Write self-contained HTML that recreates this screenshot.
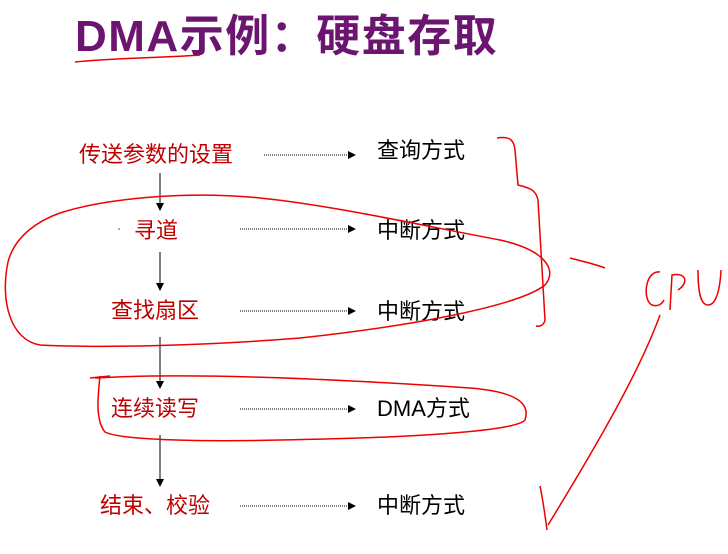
<!DOCTYPE html>
<html><head><meta charset="utf-8"><style>
body{margin:0;width:728px;height:554px;background:#fff;position:relative;overflow:hidden;font-family:"Liberation Sans","Noto Sans CJK SC",sans-serif}
.t{position:absolute;left:75px;top:0px;font-size:44px;font-weight:bold;color:#6b1470;white-space:nowrap;letter-spacing:1.5px}
.r{position:absolute;color:#c00000;font-size:22px;white-space:nowrap;line-height:26px}
.b{position:absolute;color:#000;font-size:22px;white-space:nowrap;line-height:26px;left:377px}
svg{position:absolute;left:0;top:0}
</style></head><body>
<div class="t">DMA示例：硬盘存取</div>
<div class="r" style="left:79px;top:142px">传送参数的设置</div>
<div class="r" style="left:134px;top:218px">寻道</div>
<div class="r" style="left:111px;top:298px">查找扇区</div>
<div class="r" style="left:111px;top:396px">连续读写</div>
<div class="r" style="left:100px;top:493px">结束、校验</div>
<div class="b" style="top:138px">查询方式</div>
<div class="b" style="top:218px">中断方式</div>
<div class="b" style="top:299px">中断方式</div>
<div class="b" style="top:396px">DMA方式</div>
<div class="b" style="top:493px">中断方式</div>
<svg width="728" height="554" viewBox="0 0 728 554">
<defs><marker id="a" markerWidth="8" markerHeight="8" refX="7" refY="4" orient="auto"><path d="M0,0L8,4L0,8z" fill="#000"/></marker></defs>
<g stroke="#000" stroke-width="1" fill="none">
<line x1="160" y1="173" x2="160" y2="210" marker-end="url(#a)"/>
<line x1="160" y1="252" x2="160" y2="290" marker-end="url(#a)"/>
<line x1="160" y1="337" x2="160" y2="388" marker-end="url(#a)"/>
<line x1="160" y1="435" x2="160" y2="486" marker-end="url(#a)"/>
<g stroke-dasharray="1,1">
<line x1="264" y1="155" x2="355" y2="155" marker-end="url(#a)"/>
<line x1="240" y1="229" x2="355" y2="229" marker-end="url(#a)"/>
<line x1="240" y1="311" x2="355" y2="311" marker-end="url(#a)"/>
<line x1="240" y1="409" x2="355" y2="409" marker-end="url(#a)"/>
<line x1="240" y1="506" x2="355" y2="506" marker-end="url(#a)"/>
</g></g>
<g stroke="#e00" stroke-width="1.5" fill="none">
<path d="M75,62 C110,58 160,58 200,55"/>
<path d="M60,213 C100,200 180,190 260,198 C330,205 420,225 500,240 C545,250 558,270 545,285 C520,305 420,325 300,338 C200,346 100,348 40,345 C10,340 0,300 8,262 C15,235 40,220 60,213"/>
<path d="M497,138 C510,136 514,140 515,150 L518,185 C530,188 536,190 538,200 L545,320 C544,325 540,327 536,326"/>
<path d="M570,258 C585,262 595,264 605,268"/>
<path d="M660,272 C645,270 642,300 652,305 C658,307 662,304 664,300"/>
<path d="M670,310 L672,275 C685,272 690,282 678,290"/>
<path d="M698,270 C698,290 700,305 708,305 C716,305 720,290 721,270"/>
<path d="M660,315 C640,370 600,440 548,525"/>
<path d="M540,486 C543,500 545,515 547,530"/>
<path d="M95,378 C200,372 350,380 470,388 C520,392 530,405 525,420 C515,432 400,438 280,440 C200,442 120,440 105,432 C95,420 98,395 100,376"/>
<path d="M90,378 L110,376"/>
</g>
<circle cx="119" cy="229" r="0.8" fill="#e00"/>
</svg>
</body></html>
